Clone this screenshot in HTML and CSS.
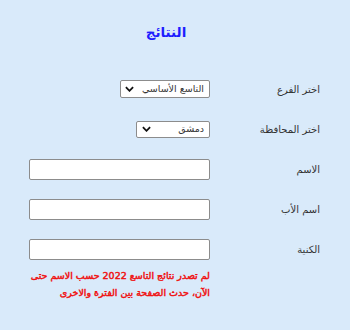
FILE: index.html
```html
<!DOCTYPE html>
<html lang="ar" dir="rtl">
<head>
<meta charset="utf-8">
<link rel="stylesheet" href="styles.css">
</head>
<body>
<div class="page">
  <h1 class="title">النتائج</h1>
  <form class="form">
    <label class="lbl">اختر الفرع</label>
    <div class="ctl">
      <div class="selwrap sel-wide">
        <select class="sel"><option>التاسع الأساسي</option></select>
        <svg class="chev" viewBox="0 0 10 6" width="9" height="6"><path d="M1 1 L5 5 L9 1" fill="none" stroke="#111" stroke-width="2"/></svg>
      </div>
    </div>
    <label class="lbl">اختر المحافظة</label>
    <div class="ctl">
      <div class="selwrap sel-narrow">
        <select class="sel"><option>دمشق</option></select>
        <svg class="chev" viewBox="0 0 10 6" width="9" height="6"><path d="M1 1 L5 5 L9 1" fill="none" stroke="#111" stroke-width="2"/></svg>
      </div>
    </div>
    <label class="lbl">الاسم</label>
    <div class="ctl"><input class="txt" type="text"></div>
    <label class="lbl">اسم الأب</label>
    <div class="ctl"><input class="txt" type="text"></div>
    <label class="lbl">الكنية</label>
    <div class="ctl"><input class="txt" type="text"></div>
    <div class="spacer"></div>
    <p class="note">لم تصدر نتائج التاسع 2022 حسب الاسم حتى<br>الآن، حدث الصفحة بين الفترة والاخرى</p>
  </form>
</div>
</body>
</html>
```

FILE: styles.css
```css
html, body {
  margin: 0;
  padding: 0;
  background: #d9eafa;
  height: 100%;
}
body {
  font-family: "DejaVu Sans", "Noto Sans", sans-serif;
  color: #222;
}
.page {
  padding-top: 22px;
}
.title {
  margin: 0 18px 0 0;
  text-align: center;
  font-size: 13.5px;
  font-weight: bold;
  color: #1e1eff;
  line-height: 20px;
}
.form {
  display: grid;
  grid-template-columns: 110px 181px;
  grid-auto-rows: 40px;
  padding-right: 30px;
  margin-top: 27px;
}
.lbl {
  font-size: 10px;
  color: #333;
  display: flex;
  align-items: center;
}
.ctl {
  display: flex;
  align-items: center;
}
.selwrap {
  position: relative;
  box-sizing: border-box;
  height: 18px;
  border: 1px solid #8c8c8c;
  border-radius: 2px;
  background: #fff;
}
.sel-wide { width: 90px; }
.sel-narrow { width: 74px; height: 17px; }
.sel {
  appearance: none;
  -webkit-appearance: none;
  display: block;
  box-sizing: border-box;
  border: 0;
  background: transparent;
  font-family: "DejaVu Sans", sans-serif;
  font-size: 9.5px;
  line-height: 14px;
  color: #333;
  width: 100%;
  height: 100%;
  padding: 0 5px 0 14px;
  margin: 0;
  outline: none;
}
.chev {
  position: absolute;
  left: 4px;
  top: 50%;
  margin-top: -3px;
  pointer-events: none;
}
.sel-narrow .chev { left: 5px; }
.txt {
  box-sizing: border-box;
  width: 181px;
  height: 21px;
  border: 1px solid #8c8c8c;
  border-radius: 2px;
  background: #fff;
  margin: 0;
}
.note {
  margin: -2px 0 0;
  font-family: "DejaVu Sans", sans-serif;
  font-size: 9.5px;
  font-weight: normal;
  -webkit-text-stroke: 0.45px #f01010;
  color: #f01010;
  line-height: 17px;
  white-space: nowrap;
}
```
